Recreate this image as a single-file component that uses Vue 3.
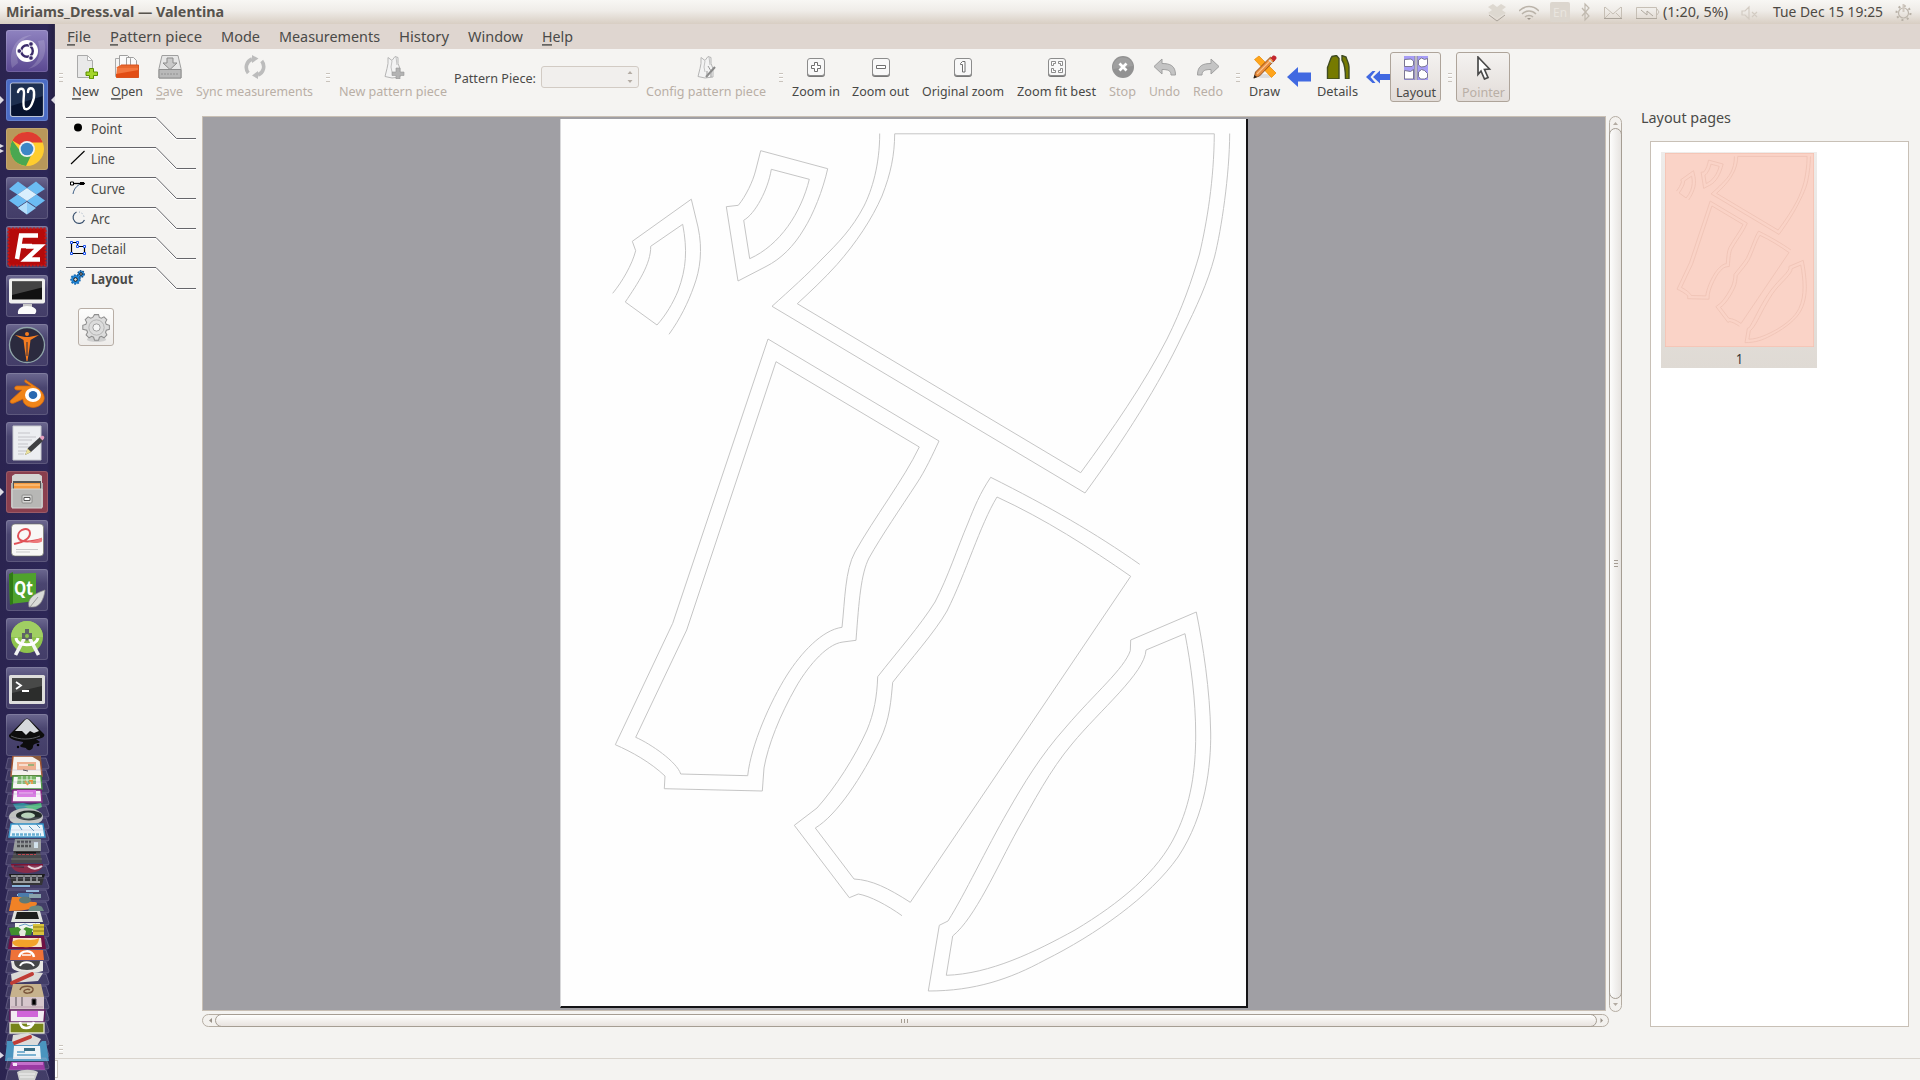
<script setup>
import { h } from 'vue'

// Text label fitted to a fixed advance width, optionally with a mnemonic underline.
const Label = (p) => {
  const size = p.size || 15
  const w = Number(p.w)
  return h('svg', { width: w, height: 20, viewBox: `0 0 ${w} 20`, class: 'label' }, [
    h('text', {
      x: 0, y: 15, textLength: w, lengthAdjust: 'spacingAndGlyphs',
      'font-size': size, 'font-weight': p.bold ? 700 : 400, fill: p.color || '#4a4a48'
    }, p.t),
    p.u ? h('rect', { x: 0, y: 17.2, width: p.u, height: 1.4, fill: p.color || '#4a4a48' }) : null
  ])
}
Label.props = ['t', 'w', 'size', 'bold', 'color', 'u']

const menus = [
  { t: 'File', w: 24, u: 8 }, { t: 'Pattern piece', w: 92, u: 8 }, { t: 'Mode', w: 39 },
  { t: 'Measurements', w: 101 }, { t: 'History', w: 50 }, { t: 'Window', w: 55 }, { t: 'Help', w: 31, u: 10 }
]

const vest = '<path d="M7 2.5l4 3 3-4 3 1v6l2 5v8.5l-8 1-7-1.5 2-8 1-5z" fill="#f3f3f3" stroke="#b5b5b5"/><path d="M11 6l-1 6 1 5M15 2l1 8" fill="none" stroke="#c2c2c2"/>'
const key = (inner) => `<rect x="3" y="5" width="18" height="17" rx="3" fill="#777"/><rect x="3.5" y="3.5" width="17" height="17" rx="2.5" fill="#f8f8f8" stroke="#8c8c8c"/>${inner}`

const tools = [
  { grip: 1, ml: 4 },
  { t: 'New', w: 27, u: 9, ml: 9, i: '<path d="M3.500 .5h10l5 5v17h-15z" fill="#e9e9e9" stroke="#a9a9a9"/><path d="M13.500 .5v5h5z" fill="#fff" stroke="#b5b5b5"/><path d="M15.500 13.500h4v3.500h4v3.500h-4v3.200h-4v-3.200h-3.500v-3.500h3.500z" fill="#a5d62c" stroke="#5c9000"/>' },
  { t: 'Open', w: 32, u: 10, ml: 12, i: '<path d="M.5 3.500h6v18h-6z" fill="#f4f4f4" stroke="#aaa"/><path d="M4.500 .5h8l3 3v16h-11zM11.500 2.500h7l3 3v14h-10z" fill="#fafafa" stroke="#a0a0a0"/><path d="M2 12l4-2h17.500v12.500H1z" fill="#f3773f"/><path d="M1 13h22.500v-3H6z" fill="#e8682f"/><path d="M1 22.500h22.500V15L1 19z" fill="#e24d14"/><path d="M1.500 22.500h22V10H6" fill="none" stroke="#d8531f"/>' },
  { t: 'Save', w: 27, u: 9, off: 1, ml: 13, i: '<path d="M4 .5h16l3 13v9.500H1v-9.500z" fill="#e6e6e6" stroke="#9f9f9f"/><path d="M1 14.500h22V23H1z" fill="#b9b9b9" stroke="#8e8e8e"/><path d="M3 19h18" stroke="#929292" stroke-dasharray="2 1"/><path d="M9 3h6v5h4l-7 6.500L5 8h4z" fill="#c9c9c9" stroke="#8b8b8b"/>' },
  { t: 'Sync measurements', w: 117, off: 1, ml: 13, i: '<path d="M5.300 18A9 9 0 0 1 9 4M18.700 6A9 9 0 0 1 15 20" fill="none" stroke="#bcbcbc" stroke-width="3.600"/><path d="M9 0l6.500 3.500L9 8zM15 16v8l-6-3.500z" fill="#bcbcbc"/>' },
  { grip: 1, ml: 13 },
  { t: 'New pattern piece', w: 108, off: 1, ml: 9, i: vest + '<path d="M15 13h4v4h4v3.500h-4V24h-4v-3.500h-4V17h4z" fill="#b3b3b3" stroke="#989898" stroke-width=".6"/>' },
  { combo: 1 },
  { t: 'Config pattern piece', w: 120, off: 1, ml: 7, i: vest + '<path d="M21 12l-9 10" stroke="#888" stroke-width="2"/><path d="M14 11l3 5M13 16v6M17 17v5" stroke="#999"/>' },
  { grip: 1, ml: 13 },
  { t: 'Zoom in', w: 48, ml: 9, i: key('<path d="M10.500 7.500h3v3h3v3h-3v3h-3v-3h-3v-3h3z" fill="#fff" stroke="#707070"/>') },
  { t: 'Zoom out', w: 57, ml: 12, i: key('<path d="M7.500 10.500h9v3h-9z" fill="#fff" stroke="#707070"/>') },
  { t: 'Original zoom', w: 82, ml: 13, i: key('<path d="M9.500 8.500l2-2h2.500v10.500h-2.500v-7.500h-2z" fill="#fff" stroke="#707070"/>') },
  { t: 'Zoom fit best', w: 79, ml: 13, i: key('<path d="M6.500 10.500v-4h4v2h-2v2zM13.500 6.500h4v4h-2v-2h-2zM6.500 13.500v4h4v-2h-2v-2zM17.500 13.500v4h-4v-2h2v-2z" fill="#fff" stroke="#707070" stroke-width=".8"/>') },
  { t: 'Stop', w: 27, off: 1, ml: 13, i: '<circle cx="12" cy="12" r="11" fill="#929292"/><path d="M2 14a10 10 0 0 1 20-3z" fill="#a9a9a9" opacity=".6"/><path d="M8.500 8.500l7 7M15.500 8.500l-7 7" stroke="#fff" stroke-width="2.800"/>' },
  { t: 'Undo', w: 31, off: 1, ml: 13, i: '<path d="M1 11.500L9 4v4.500c8 0 13.500 2 13.500 11.500h-4.500c0-4.500-3-5.500-9-5.500V19z" fill="#c4c4c4" stroke="#a0a0a0"/>' },
  { t: 'Redo', w: 30, off: 1, ml: 13, i: '<path d="M23 11.500L15 4v4.500C7 8.500 1.500 10.500 1.500 20H6c0-4.500 3-5.500 9-5.500V19z" fill="#c4c4c4" stroke="#a0a0a0"/>' },
  { grip: 1, ml: 13 },
  { t: 'Draw', w: 31, ml: 9, i: '<ellipse cx="12" cy="21" rx="8" ry="2" fill="#ddd"/><path d="M1.500 4.500L6 1l17 17-4.500 4.500z" fill="#ffa51c" stroke="#e88a00" stroke-width=".7"/><path d="M1 23l1.500-6L17.500 2l4 3.500L6.500 21z" fill="#e78a3a" stroke="#7d3f0e" stroke-width=".8"/><path d="M4 19L19 4" stroke="#fcc48b" stroke-width="1.200"/><path d="M17.500 3.500l2-2.500c2-1.500 5 1 3.700 3l-2 2.200z" fill="#c3262e"/><path d="M16 5l4 3.500" stroke="#ddd" stroke-width="1.500"/><path d="M.5 23.500l1-3.500 2.500 2z" fill="#222"/>' },
  { arrow: '<path d="M0 12L11 2v5.500h13v9H11V22z" fill="#4169e1"/>', ml: 7 },
  { t: 'Details', w: 41, ml: 6, i: '<path d="M1.500 24V12.500C3.500 8 4 4 6 1.500l4.500-1 2.500 3V24zM16 .5l4 1.500c1 4 3 6 3 10v12h-3.500C19.500 14 18 8 16 5z" fill="#767a00" stroke="#3f4b22" stroke-width="1.400"/>' },
  { arrow: '<path d="M0 12l6.500-6h3l-5 6 5 6h-3zM7 12l7-6.500V9h10v6H14v3.500z" fill="#4169e1"/>', ml: 8 },
  { t: 'Layout', w: 40, bw: 51, ml: 0, i: '<path d="M0 0h24v24H0z" fill="#a79df6"/><path d="M.5 3.500L7 3l2.500 2v4L8 10.500H.5zM14.500 4l3-2 3 1.500 3-1v6l-2.500 2-4 .5-2.500-2zM.5 14.500l6 1 3-2v9.500h-9zM14.500 16l3-2.500 3 1 3 3v4l-3 1.500h-4l-2-2.500z" fill="#fff" stroke="#6f6c86" stroke-width=".9"/><path d="M12 0v24" stroke="#85828c" stroke-width="3"/><path d="M12 0v24" stroke="#e4e2e6" stroke-width="1.200"/>' },
  { grip: 1, ml: 7 },
  { t: 'Pointer', w: 43, off: 1, bw: 54, ml: 4, i: '<path d="M7 1l11.500 12-5 .5 3.500 8-3.500 1.500-3.500-8-3 3.500z" fill="#fff" stroke="#4a4a4a" stroke-width="1.700"/>' }
]

const tabs = [
  { t: 'Point', w: 31, i: '<circle cx="8" cy="7.500" r="4" fill="#000"/>' },
  { t: 'Line', w: 24, i: '<path d="M1 14L14.500 1" stroke="#000" stroke-width="1.100"/>' },
  { t: 'Curve', w: 34, i: '<path d="M3 14C4 8 8 4 14 3" fill="none" stroke="#3d5e86" stroke-width="1"/><path d="M2 3.500h13" stroke="#000" stroke-width="1.300"/><path d="M.5 2h3v3h-3z" fill="#fff" stroke="#000"/><path d="M10 2h4v3h-4z" fill="#000"/>' },
  { t: 'Arc', w: 19, i: '<path d="M6.500 2A6 6 0 1 0 14.500 10" fill="none" stroke="#38506e" stroke-width="1.200"/><path d="M9 2a6 6 0 0 1 5 5" fill="none" stroke="#8ea1b8" stroke-dasharray="1 2"/>' },
  { t: 'Detail', w: 35, i: '<path d="M1.500 2.500h6v4h7v7h-13z" fill="none" stroke="#000" stroke-width="1.200"/><path d="M.5 1.500h2v2h-2zM6.500 1.500h2v2h-2zM6.500 5.500h2v2h-2zM13.500 5.500h2v2h-2zM.5 12.500h2v2h-2zM13.500 12.500h2v2h-2z" fill="#fff" stroke="#1750f0"/>' },
  { t: 'Layout', w: 42, bold: 1, i: '<circle cx="5.500" cy="9.500" r="4.400" fill="#1f88dc" stroke="#1a6db4" stroke-width="1.800" stroke-dasharray="1.800 1.300"/><circle cx="5.500" cy="9.500" r="1.800" fill="#ddd" stroke="#111"/><circle cx="11" cy="4" r="3.200" fill="#2a92e4" stroke="#1a4f86" stroke-width="1.500" stroke-dasharray="1.500 1.200"/><circle cx="11" cy="4" r="1.300" fill="#ddd" stroke="#111"/>' }
]

const launcher = [
  { bg: 'linear-gradient(#8f83c0,#5a4891)', i: '<path d="M6 38C2 20 10 6 26 5c-12 4-17 14-14 28zM38 10c4 14-2 26-16 29 10-6 14-14 10-28z" fill="#fff" opacity=".16"/><circle cx="21" cy="21" r="11" fill="#fff"/><circle cx="21" cy="21" r="5.800" fill="none" stroke="#3b2c6b" stroke-width="2.400"/><path d="M21 21L12 21M21 21L26 12.500M21 21L26 29.500" stroke="#fff" stroke-width="1"/><circle cx="13.300" cy="21" r="2.300" fill="#3b2c6b" stroke="#fff" stroke-width=".8"/><circle cx="25" cy="14" r="2.300" fill="#3b2c6b" stroke="#fff" stroke-width=".8"/><circle cx="25" cy="28" r="2.300" fill="#3b2c6b" stroke="#fff" stroke-width=".8"/>' },
  { bg: '#4a6bc4', l: 1, r: 1, i: '<rect x="4.500" y="4" width="33" height="33.500" rx="2" fill="#07132f" stroke="#b9c3d8" stroke-width="1.200"/><path d="M5 5h32v12L5 27z" fill="#2d4268" opacity=".6"/><path d="M12 13c1-4 6-5 6 1 0 5-2 14 1 16 5 2 10-9 9-17-.5-5-6-5-6 0" fill="none" stroke="#fff" stroke-width="2.400" stroke-linecap="round"/>' },
  { bg: '#b8985a', l: 2, i: '<circle cx="21" cy="21" r="17" fill="#ffcd2e"/><path d="M21 21L6.300 12.500A17 17 0 0 1 36.500 14H21z" fill="#df3c32"/><path d="M21 4A17 17 0 0 1 36.700 14.500H21z" fill="#df3c32"/><path d="M6.300 12.500A17 17 0 0 0 20 38l6.500-13.500L15 24z" fill="#4aa751"/><circle cx="21" cy="21" r="8" fill="#f2f2f2"/><circle cx="21" cy="21" r="6.300" fill="#3d86c6"/>' },
  { i: '<path d="M12 4.500l9 6.500-9.500 6.500L3 12zM30 4.500L21 11l9.500 6.500L39 12zM3 23.500l8.500-6 9.500 6.500-9 6zM39 23.500l-8.500-6L21 24l9 6z" fill="#6bbcf3"/><path d="M21 11l9.500 6.500L21 24l-9.500-6.500z" fill="#d9effd"/><path d="M12 31l9-6 9 6-9 6.500z" fill="#8bcbf6"/><path d="M12 31l9-6v12.500z" fill="#b5defa"/>' },
  { i: '<rect x="2.500" y="2.500" width="37" height="37" fill="#b50a0a" stroke="#c51818" stroke-dasharray="2 1.500" stroke-width="2"/><path d="M11 33L15 9.500h17M13 20h13M20 20.500h14L20 33.500h14" fill="none" stroke="#fff" stroke-width="4.500"/>' },
  { i: '<rect x="3" y="3.500" width="36" height="25" rx="2" fill="#f0f0ee"/><rect x="6" y="6.500" width="30" height="18" fill="#111"/><path d="M6 6.500h30v6L6 20z" fill="#444"/><path d="M17 29h9v3h-9z" fill="#c9c9c9"/><path d="M12 39c-1-5 3-8 9-8s12 3 8 8z" fill="#fafafa"/>' },
  { i: '<circle cx="21" cy="21" r="17.500" fill="#2b2a3e" stroke="#8fa4a8" stroke-width="1.300"/><circle cx="21" cy="10" r="2" fill="#f47c20"/><path d="M9 11l10 2h4l10-2-8.500 5-1 8-2 13h-1l-2-13-1-8z" fill="#f47c20"/><path d="M21 18v14" stroke="#2b2a3e"/>' },
  { i: '<path d="M21 8l12 8c6 5 6 10 4 13-4 7-15 7-19 1-1-2-1-3-1-4l-9 4c-3 1-5-1-3-3l11-10H11c-3 0-3-4 0-4h14l-6-4c-1-2 1-3 2-1z" fill="#f18519" stroke="#d96a09" stroke-width=".8"/><ellipse cx="27" cy="22" rx="8" ry="7" fill="#fff"/><ellipse cx="27" cy="22" rx="4.300" ry="4" fill="#2a68b0"/>' },
  { i: '<path d="M7 4h28v34H7z" fill="#eceef1" stroke="#c9cbd0"/><path d="M12 11h12M12 15h18M12 18h14M12 22h10M12 25h14M12 29h10M12 32h6" stroke="#c3c3c9" stroke-width="1.200"/><path d="M19 33l3-7L34 15l3.500 3.500L25 30z" fill="#3f4043"/><path d="M19 33l2.500-6.500L25 30z" fill="#e9df9a"/><path d="M33.500 15.500l2-1.500c2-1 3.500 1 2.500 2.500l-1.500 2z" fill="#e7a0c0"/>' },
  { bg: '#8a3f4e', l: 1, i: '<path d="M6 5l3-2h24l3 2v8H6z" fill="#d4d4d2"/><path d="M5 12h32v24H5z" fill="#b2b2b0"/><path d="M7 10h28v8H7z" fill="#555"/><path d="M8 12h26v6H8z" fill="#f59a3f"/><path d="M8 14h26" stroke="#ffd39b"/><path d="M6 18h30v19H6z" fill="#b7b7b5" stroke="#d7d7d5"/><rect x="16" y="24" width="10" height="8" rx="1" fill="#d9d9d7" stroke="#8c8c8a"/><path d="M18 26.500h6v3h-6z" fill="#fff" stroke="#555"/>' },
  { i: '<rect x="5.500" y="4" width="32" height="32" rx="3.500" fill="#f8f8f6" stroke="#6c7060" stroke-width=".6"/><path d="M8 24c10-2 16-6 16-11 0-7-12-4-12 3 0 6 9 7 24 3" fill="none" stroke="#e05257" stroke-width="2"/><path d="M22 21.500c6 0 10-2 14-4v4c-4 2-9 2-14 0z" fill="#ec7a7c"/><path d="M10 29.500h22M10 32h14" stroke="#c9c9c9"/>' },
  { i: '<path d="M3 5l27-1v28L4 35z" fill="#4fa22d"/><path d="M3 5l4-2v32l-3 1z" fill="#2f7b15"/><text x="8" y="26" font-size="20" font-weight="700" font-family="Open Sans, sans-serif" textLength="19" lengthAdjust="spacingAndGlyphs" fill="#fff">Qt</text><path d="M23 38c-2-8 4-13 16-17-1 9-5 17-12 17z" fill="#d9dad8" stroke="#8e8e8c" stroke-width=".7"/><path d="M24 38l8-10" stroke="#999"/>' },
  { i: '<circle cx="21" cy="19" r="16" fill="#8fc44d"/><path d="M5 19a16 16 0 0 1 32 0z" fill="#a0cf63"/><path d="M18.500 20L9.500 37M23.500 20l9 17" stroke="#f3f3f3" stroke-width="3.600"/><path d="M10 20c1 9 20 9 22 0" fill="none" stroke="#fff" stroke-width="3"/><path d="M19 11h4v4h3v6h-3l-2 2-2-2h-3v-6h3z" fill="#5f6367"/><circle cx="21" cy="18" r="2" fill="#8fc44d"/>' },
  { i: '<rect x="3" y="8" width="36" height="29" rx="1.500" fill="#dededc"/><rect x="6" y="11" width="30" height="23" fill="#2c2d2c"/><path d="M6 11h30v8L6 26z" fill="#484948"/><path d="M10 15l5 3.500-5 3.500M16 24h7" fill="none" stroke="#fff" stroke-width="1.800"/>' },
  { ink: 1, i: '<path d="M3 21L18 6q3-3 6 0l14 14c2 3-4 5-8 5l4 3c-3 2-7 1-7 5-1 4-6 4-7 1l-5-1c-3-2 3-3 2-5-6-1-15-3-14-7z" fill="#0d0d0d"/><path d="M9 17L19 6q2-2 4 0l10 11-5 2-4-2-4 4-4-4z" fill="#d6d9dc"/><path d="M5 22c8 4 20 4 29 0" stroke="#5d5f64" fill="none"/><circle cx="32" cy="31" r="1.300"/><circle cx="12" cy="33" r="1.200"/>' }
]

// Seam and cutting contours of every detail placed on the sheet.
const contours = [
  'M612.700 293.300C622 282 632 265 635.700 250.700L632.300 241.300L691.300 199.200L698 227C703 250 700 270 694 286C688 303 680 319 669 334.300',
  'M650.700 246.300L682.700 224.300C687.500 250 686.500 268 678 291C673 303 666 315 657 325L625.300 302C638 283 651 264 650.700 246.300Z',
  'M760.700 150.700L827.700 168.700C823 190 813 215 804 229C794 246 781 259 766 266.500L738 281L726.300 206.700L738.300 205.300C746 196 753 181 755.500 171Z',
  'M771.300 169.300L809.300 179.300C801 213 780 245 749.700 258.700L743.700 220.300C755 214 768 190 771.300 169.300Z',
  'M879.700 133.500C879.700 165 872 190 864 206C852 229 838 243 822 259C808 274 790 290 772 306.300L1085 493C1124 440 1160 383 1182 336C1197 306 1207.500 283 1214.500 257C1221.500 229 1229.500 175 1229.700 133.500',
  'M894.700 133.800H1214.300C1214 180 1207 222 1199.500 254C1192 280 1182 309 1167 339C1144 384 1112 430 1080.700 472.700L797.300 303.700C810 292 824 279 837 264.500C856 243 872 219 882 196C891 173 894.500 155 894.700 133.800Z',
  'M768 339L939 441C933 454 925 471 917 483C900 509 882 535 869 558C861 574 859 600 856 640.300L843 642C825 644 805 671 796 687C780 715 768 745 764 768L762.300 791L664.300 788.700L665 776C650 762 632 752 615.300 744.700L672.700 623.300Z',
  'M776 361.700L919.300 447C904 479 874 518 855 552C845 570 845 600 842 627.300C822 630 801 653 787 675C770 702 751 745 747.700 775.700L680.700 774C677 762 651 744 635.700 737.300L686.700 630Z',
  'M1139.700 564.300C1095 533 1050 507 990.700 477.300C980 493 974 508 968 523C957 549 948 577 935 602C920 626 897 652 877.700 676.700C877 697 874 713 867 730C855 757 835 788 817 808L794.300 825.300L849.300 897.700L858.300 894C870 896 887 905 902 915.700',
  'M997 497C1045 519 1090 548 1130.700 576.300L910.300 902.300C888 888 872 880 854 879L815.300 828C837 815 862 777 880 740C890 719 891 700 892.700 682.300C910 660 935 632 947 611C966 573 980 525 997 497Z',
  'M1196.300 612L1130.700 640L1130.300 650.700C1124 669 1095 693 1066 727C1040 756 1023 785 1008 811C986 849 965 894 948 921L939.300 925.300L928.300 991C975 991 1010 979 1045 960C1095 935 1150 897 1178 857C1206 815 1211 765 1210.700 733C1210 690 1203 645 1196.300 612Z',
  'M1185 633.700L1146 650C1145 673 1100 710 1072 744C1050 770 1033 803 1018 829C997 867 975 918 952.700 936L946.300 975.300C990 974 1035 952 1075 930C1120 903 1158 872 1176 834C1191 803 1195.700 770 1195.700 735C1195.700 700 1191 665 1185 633.700Z'
]
const gear = 'M15.500 2h5l1 3.500 2.500 1 3.300-1.700 3.500 3.500-1.700 3.200 1 2.600 3.900 1.200v5l-3.800 1.100-1 2.600 1.700 3.300-3.500 3.500-3.300-1.700-2.500 1-1 3.700h-5l-1.200-3.700-2.500-1-3.200 1.700-3.600-3.500 1.800-3.300-1-2.600L1 20.300v-5l3.800-1.200 1-2.600L4 8.300l3.600-3.500 3.200 1.700 2.500-1z'
const stack = [
  '<path d="M13 0h27l2 20H11z" fill="#f5f1ec" stroke="#a0522d" stroke-width="1.500"/><path d="M31 0h10v6z" fill="#8a5a3c"/><path d="M17 6h19v8H17z" fill="#eeb090"/><path d="M19 9h9" stroke="#f7dccc" stroke-width="2"/><path d="M28 9h6" stroke="#9bb07a" stroke-width="2"/><path d="M23 14l5 1" stroke="#333"/>',
  '<path d="M13 20h28l1 13H12z" fill="#f7f7f4" stroke="#3a8b34" stroke-width="1.500"/><path d="M18 20h18v8H17z" fill="#76b566"/><path d="M17 24h19M22 20v8M27 20v8M31 20v8" stroke="#e6f3e0"/><path d="M25 25l3 4M29 25h3v3" stroke="#e89238" stroke-width="2" fill="none"/>',
  '<path d="M13 34h28l1 12H12z" fill="#f6eff6" stroke="#7b1d79" stroke-width="1.500"/><path d="M17 34h19v7H17z" fill="#d66fe0"/><path d="M19 37h14" stroke="#f2c2f5"/>',
  '<path d="M13 48l10-1 16 4-6 5H18z" fill="#2f8d9a"/><path d="M24 50l17-3 1 4-9 4z" fill="#48b878"/>',
  '<ellipse cx="26" cy="61" rx="17" ry="9" fill="#bfc2c0"/><ellipse cx="29" cy="59.500" rx="13" ry="5" fill="#222b28"/><ellipse cx="28" cy="59.500" rx="7" ry="3" fill="#b8d3b9"/>',
  '<path d="M11 68h32l2 13H9z" fill="#e9f4fa" stroke="#2f91c7" stroke-width="1.500"/><path d="M18 68l4 6M29 70l5 5M36 68l4 4" stroke="#4f90b8"/><path d="M12 78.500h29" stroke="#5aa6cf" stroke-width="2.500" stroke-dasharray="3 1"/>',
  '<path d="M15 83h26v12H13z" fill="#8e9394"/><path d="M17 86h14M17 90h14" stroke="#3a3d3f" stroke-width="2.500" stroke-dasharray="3 1"/><path d="M34 86h4v6h-4z" fill="#cfe0ea"/>',
  '<path d="M14 95h26l2 12H11z" fill="#353638"/><path d="M16 97.500h20" stroke="#151515" stroke-width="3"/><path d="M18 98.500h18" stroke="#b82020" stroke-dasharray="3 1"/><path d="M11 103h31" stroke="#666"/>',
  '<path d="M11 108h32c0 5-5 9-16 9s-16-4-16-9z" fill="#7c1535"/><path d="M28 110c5 4 10 3 14 0" stroke="#e5d5dc" stroke-width="2" fill="none"/><path d="M14 110l10 1" stroke="#39102a" stroke-width="2"/>',
  '<path d="M9 118h36l-3 11H12z" fill="#1d1e20"/><path d="M11 120h31M13 126h27" stroke="#b5b8ba" stroke-width="1.500"/><path d="M17 119v6M24 119v6M31 119v6M37 119v6" stroke="#7a7c7f" stroke-width="2"/>',
  '<path d="M12 130h18M26 135h13M17 139h13" stroke="#8ab4d8" stroke-width="2"/>',
  '<path d="M18 137h15v4H18z" fill="#4b7cab"/><path d="M29 138h12v4H29z" fill="#8aa3ac"/>',
  '<path d="M12 141h12c3 8 12 3 13 6 0 5-9 8-28 8z" fill="#f08226"/><ellipse cx="25" cy="144" rx="6" ry="3.500" fill="#5f7a75"/><path d="M30 151c5-2 10-2 12 0l2 4H28z" fill="#6c8a81"/>',
  '<path d="M14 155h26l3 11H11z" fill="#dfe2de"/><path d="M17 156h20l2 7H15z" fill="#1c1e1c"/>',
  '<path d="M15 167h25v9H15z" fill="#f2f4ef"/><path d="M19 170l6-2 5 2 6-2" stroke="#6ba3c9" fill="none"/><path d="M33 168h11v11H33z" fill="#d9c33d"/><path d="M33 171h11M33 175h11" stroke="#8f7c14"/><path d="M9 172l9-1 4 3 4-3 7 2-2 6H11z" fill="#418f2e"/><path d="M19 176l3-4 4 3-1 5h-5z" fill="#e6eade"/>',
  '<path d="M10 180h34l2 13H8z" fill="#6d1245"/><path d="M13 182h28l1 9H12z" fill="#f5e3c6"/><path d="M12 186c8-6 18 1 27-4 0 8-7 10-16 9-7 0-10-2-11-5z" fill="#f3a22a"/>',
  '<path d="M11 194h32l1 10H10z" fill="#ee7238"/><path d="M19 201c2-7 13-8 15 0" fill="none" stroke="#fff" stroke-width="2.500"/><path d="M22 199h9" stroke="#fff" stroke-width="1.500"/>',
  '<path d="M11 205h32v10c-9 3-25 3-31-3z" fill="#e6e6e3"/><path d="M14 205h26c0 6-5 9-13 9s-13-3-13-9z" fill="#454648"/><path d="M20 210c2-5 11-5 14 0" fill="none" stroke="#fff" stroke-width="2"/>',
  '<path d="M11 218l10-3 22 2-5 8-26 2z" fill="#dadad7"/><path d="M12 227l20-9" stroke="#c03d36" stroke-width="4" stroke-linecap="round"/>',
  '<path d="M13 228h28l3 13H10z" fill="#c7b28d"/><path d="M20 234c1-5 14-5 13 0-1 4-10 4-9 1 1-2 5-2 6-1" fill="none" stroke="#79543a" stroke-width="1.500"/>',
  '<path d="M10 241h34v13H10z" fill="#d6c6cc"/><path d="M16 241v9M22 241v9M32 243h4v6h-4z" stroke="#554d54"/><path d="M11 251h32" stroke="#b99fac"/>',
  '<path d="M10 254h35l-1 12H10z" fill="#f2ebf2" stroke="#5d1b5c" stroke-width="1.500"/><path d="M17 255h21v6H17z" fill="#cf64d8"/>',
  '<path d="M10 267h34v10H10z" fill="#77841b" stroke="#e7ead2" stroke-width="1.300"/><path d="M34 266c-3 8-13 8-14 0M27 268h7" fill="none" stroke="#fff" stroke-width="2.500"/>',
  '<path d="M13 279l15-2 13 6-4 7-26 2z" fill="#dcdcda"/><path d="M12 288l18-7" stroke="#c03d36" stroke-width="4" stroke-linecap="round"/>',
  '<path d="M7 285h5l2 4h24l4-4h4l3 20H5z" fill="#4a94bf"/><path d="M14 290h26l1 13H13z" fill="#eef4f7"/><path d="M17 296h8M17 299h19" stroke="#7db3d2" stroke-width="2"/><path d="M24 292h11v3H24z" fill="#3a6f86"/>',
  '<path d="M11 306h33l1 8H9z" fill="#9b3aa3"/><path d="M12 306h31v3H12z" fill="#c46fca"/><path d="M13 307h4v3h-4z" fill="#f6e6f7"/>',
  '<path d="M17 316c5-3 16-3 21 0l-3 8H19z" fill="#cfd0ce"/><path d="M19 318h16M20 321h14" stroke="#f2f2f2"/>'
]
</script>

<template>
  <div class="desktop">
    <header class="panel">
      <Label t="Miriams_Dress.val — Valentina" w="218" size="15" bold="1" color="#57534d" />
      <div class="indicators">
        <svg width="18" height="20" viewBox="0 0 18 20"><path d="M0 5l5-3 4 3 4-3 5 3-4 3 4 3-9 5-9-5 4-3z" fill="#ddd8d0" /><path d="M1 13l8 6 8-6" fill="none" stroke="#aaa39a" /></svg>
        <svg class="i-wifi" width="20" height="20" viewBox="0 0 20 20"><path d="M0 9c6-6 14-6 20 0M3 12c4-4 10-4 14 0M6 15c2-2 6-2 8 0" fill="none" stroke="#bbb4aa" stroke-width="1.500" /><path d="M8 16h4l-2 2z" fill="#9d968c" /></svg>
        <div class="i-lang"><Label t="En" w="14" size="12" color="#e9e5df" /></div>
        <svg class="i-bt" width="10" height="20" viewBox="0 0 10 20"><path d="M1 6l7 8-4 4V2l4 4-7 8" fill="none" stroke="#c0b9af" stroke-width="1.200" /></svg>
        <svg class="i-mail" width="18" height="16" viewBox="0 0 18 16"><path d="M.5 3v11M17.500 3v11M1 3l8 7 8-7M1 14l5-5M17 14l-5-5" fill="none" stroke="#c6bfb5" /><path d="M0 14.500h18" stroke="#aaa39a" /></svg>
        <svg class="i-bat" width="24" height="16" viewBox="0 0 24 16"><path d="M.5 14V3.500h20V14M21 5l2 3-2 3" fill="none" stroke="#c6bfb5" /><path d="M0 14.500h21M5 6l6 5v-4l6 5" fill="none" stroke="#b0a99f" /></svg>
        <Label class="i-time" t="(1:20, 5%)" w="65" size="14.500" color="#4d4943" />
        <svg class="i-vol" width="18" height="16" viewBox="0 0 18 16"><path d="M1 7h3l4-4v12l-4-4H1zM11 8l5 5M16 8l-5 5" fill="none" stroke="#d3ccc3" stroke-width="1.200" /></svg>
        <Label class="i-clock" t="Tue Dec 15 19:25" w="110" size="14.500" color="#4d4943" />
        <svg class="i-cog" width="17" height="20" viewBox="0 0 17 20"><circle cx="8.500" cy="11" r="5" fill="none" stroke="#bdb6ac" stroke-width="1.200" /><circle cx="8.500" cy="11" r="7" fill="none" stroke="#b8b1a7" stroke-width="2" stroke-dasharray="2 3.500" /><path d="M8.500 2v8" stroke="#d0c9c0" stroke-width="2" /></svg>
      </div>
    </header>

    <div class="work">
      <aside class="launcher">
        <div v-for="(a, n) in launcher" :key="n" class="tile" :class="{ ink: a.ink }" :style="a.bg ? { background: a.bg } : null">
          <i v-if="a.l === 2" class="pip left high" /><i v-if="a.l" class="pip left" :class="{ low: a.l === 2 }" /><i v-if="a.r" class="pip right" />
          <svg width="42" height="42" viewBox="0 0 42 42" v-html="a.i" />
        </div>
        <svg class="folded" width="55" height="325" viewBox="0 0 55 325">
          <g v-for="(s, n) in stack" :key="n">
            <path :d="`M8 ${n * 12 + 2}h38l3 9q0 2 -2 2h-40q-2 0 -1 -2z`" fill="#fff" fill-opacity=".1" stroke="#a9a4c4" stroke-opacity=".35" />
            <g v-html="s" />
          </g>
          <path d="M0 296l4 3.500-4 3z" fill="#dcdae4" />
        </svg>
      </aside>

      <main class="window">
        <nav class="menubar"><Label v-for="m in menus" :key="m.t" v-bind="m" size="14.500" /></nav>

        <div class="toolbar">
          <template v-for="(b, n) in tools" :key="n">
            <span v-if="b.grip" class="grip" :style="{ marginLeft: b.ml + 'px' }" />
            <div v-else-if="b.combo" class="picker">
              <Label t="Pattern Piece:" w="82" size="13" />
              <div class="combo"><svg width="8" height="14" viewBox="0 0 8 14"><path d="M4 1l2.500 3h-5zM4 13l2.500-3h-5z" fill="#b4aca4" /></svg></div>
            </div>
            <svg v-else-if="b.arrow" class="arrow" width="24" height="24" viewBox="0 0 24 24" :style="{ marginLeft: b.ml + 'px' }" v-html="b.arrow" />
            <div v-else class="tool" :class="{ pressed: b.bw }" :style="{ marginLeft: b.ml + 'px', width: (b.bw || b.w) + 'px' }">
              <svg width="24" height="24" viewBox="0 0 24 24" v-html="b.i" />
              <Label :t="b.t" :w="b.w" size="13" :u="b.u" :color="b.off ? '#b9afa6' : '#484846'" />
            </div>
          </template>
        </div>

        <div class="body">
          <div class="tabs">
            <div v-for="t in tabs" :key="t.t" class="tab">
              <svg class="edge" width="131" height="24" viewBox="0 0 131 24"><path d="M0 2.500H90L110.500 23.500H130" fill="none" stroke="#fff" stroke-width="1.500" /><path d="M0 1.500H90L110.500 22.500H130" fill="none" stroke="#65656a" /></svg>
              <div class="tab-row">
                <svg width="16" height="16" viewBox="0 0 16 16" v-html="t.i" />
                <Label :t="t.t" :w="t.w" :bold="t.bold" size="14" />
              </div>
            </div>
            <div class="gear-btn">
              <svg width="29" height="29" viewBox="0 0 36 36"><ellipse cx="18" cy="33" rx="12" ry="3" fill="#cfcfcf" /><path :d="gear" fill="#dcdcdc" stroke="#8e8e8e" stroke-width="1.300" /><circle cx="18" cy="18" r="9.500" fill="none" stroke="#aaa" /><circle cx="18" cy="18" r="4.500" fill="#f6f6f6" stroke="#8e8e8e" /></svg>
            </div>
          </div>

          <div class="canvas">
            <div class="row">
              <div class="view">
                <div class="sheet">
                  <svg width="685" height="886" viewBox="561 119 685 886"><path v-for="d in contours" :key="d" :d="d" fill="none" stroke="#c2c2c2" stroke-width=".95" /></svg>
                </div>
              </div>
              <div class="vbar">
                <svg width="13" height="11" viewBox="0 0 13 11"><path d="M6.500 5l2.500 3H4z" fill="#b3aba2" /></svg>
                <div class="thumb"><span /></div>
                <svg width="13" height="12" viewBox="0 0 13 12"><path d="M6.500 7L9 4H4z" fill="#b3aba2" /></svg>
              </div>
            </div>
            <div class="hbar">
              <svg width="12" height="11" viewBox="0 0 12 11"><path d="M6 5.500L9 3v5z" fill="#999188" /></svg>
              <div class="thumb"><span /></div>
              <svg width="11" height="11" viewBox="0 0 11 11"><path d="M6 5.500L3.500 3v5z" fill="#999188" /></svg>
            </div>
          </div>

          <section class="pages">
            <Label t="Layout pages" w="90" size="14.500" />
            <div class="list">
              <div class="item">
                <svg width="149" height="194" viewBox="560 118 686 893" preserveAspectRatio="none"><rect x="560" y="118" width="686" height="893" fill="#fad3c7" stroke="#f3bfb0" stroke-width="6" /><path v-for="d in contours" :key="d" :d="d" fill="none" stroke="#efc3b5" stroke-width="4" /></svg>
                <Label t="1" w="7" size="14.500" color="#333" />
              </div>
            </div>
          </section>
        </div>

        <div class="lower-dock"><span class="grip" /></div>
        <footer class="status"><i /></footer>
      </main>
    </div>
  </div>
</template>

<style>
html, body { margin: 0; overflow: hidden; }
.label { display: block; flex: none; overflow: visible; }
</style>

<style scoped>
.desktop { width: 1920px; height: 1080px; overflow: hidden; display: flex; flex-direction: column; font-family: "Noto Sans", "Open Sans", sans-serif; background: #f4f3f1; }
svg { display: block; flex: none; }
.panel { height: 24px; flex: none; display: flex; justify-content: space-between; padding: 2px 8px 0 6px; box-sizing: border-box; background: linear-gradient(#f8f7f4, #efece8 45%, #d8cec3); }
.indicators { display: flex; align-items: flex-start; }
.i-wifi { margin-left: 13px; }
.i-lang { margin-left: 11px; width: 20px; height: 20px; display: flex; justify-content: center; background: #dcd6ce; border-radius: 2px; }
.i-bt { margin-left: 11px; }
.i-mail { margin: 2px 0 0 13px; }
.i-bat { margin: 2px 0 0 14px; }
.i-time { margin-left: 3px; }
.i-vol { margin: 2px 0 0 13px; }
.i-clock { margin-left: 14px; }
.i-cog { margin-left: 12px; }

.work { flex: 1; display: flex; min-height: 0; }
.launcher { width: 55px; flex: none; box-sizing: border-box; padding-top: 6px; overflow: hidden; background: linear-gradient(90deg, #2b2450, #2d2757 85%, #252046 97%, #3d3855); }
.tile { position: relative; width: 42px; height: 42px; margin: 0 0 7px 6px; border-radius: 3px; background: linear-gradient(#6c6890, #4a4570 35%, #433d68); box-shadow: inset 0 0 0 1px rgba(255, 255, 255, .14); }
.tile.ink { margin-top: -2px; margin-bottom: 0; }
.pip { position: absolute; top: 17px; width: 0; height: 0; border: 4px solid transparent; }
.pip.left { left: -6px; border-left-color: #dddbe4; }
.pip.left.high, .pip.left.low { border-width: 2px 0 2px 4px; top: 16px; }
.pip.left.low { top: 21px; }
.pip.right { right: -7px; border-right-color: #dddbe4; border-left: 0; }

.window { flex: 1; display: flex; flex-direction: column; min-width: 0; }
.menubar { height: 25px; flex: none; box-sizing: border-box; display: flex; gap: 19px; padding: 3px 0 0 12px; background: #dfd6d0; }
.toolbar { height: 61px; flex: none; display: flex; align-items: flex-start; background: #f5f4f2; }
.grip { width: 4px; height: 9px; flex: none; margin-top: 24px; background: repeating-linear-gradient(#c9c3bc 0 1px, #fff 1px 2px, transparent 2px 4px); }
.tool { flex: none; box-sizing: border-box; padding-top: 6px; height: 54px; display: flex; flex-direction: column; align-items: center; gap: 2px; }
.tool.pressed { margin-top: 3px; height: 50px; padding-top: 3px; border: 1px solid #aea49a; border-radius: 3px; background: linear-gradient(#f4f2f0, #e2dcd8); }
.arrow { margin-top: 16px; }
.picker { display: flex; margin: 17px 0 0 7px; gap: 5px; align-items: center; }
.picker .label { margin-top: 1px; }
.combo { width: 98px; height: 22px; box-sizing: border-box; border: 1px solid #d2cbc4; border-radius: 3px; background: #f1efed; display: flex; align-items: center; justify-content: flex-end; padding-right: 4px; }

.body { height: 923px; flex: none; display: flex; }
.tabs { width: 147px; flex: none; box-sizing: border-box; padding: 6px 0 0 11px; }
.tab { position: relative; height: 30px; }
.edge { position: absolute; left: 0; top: 0; }
.tab-row { display: flex; gap: 5px; padding: 3px 0 0 4px; }
.tab-row > svg:first-child { margin-top: 1px; }
.gear-btn { width: 36px; height: 38px; margin: 12px 0 0 12px; box-sizing: border-box; border: 1px solid #b8aea6; border-radius: 3px; background: linear-gradient(#fdfdfc, #eeecea); display: flex; align-items: center; justify-content: center; }

.canvas { width: 1420px; flex: none; padding-top: 6px; }
.row { display: flex; gap: 3px; height: 898px; }
.view { width: 1404px; height: 895px; box-sizing: border-box; border: 1px solid #c8bfb4; background: #a09fa4; display: flex; padding: 2px 0 0 357px; }
.sheet { width: 685px; height: 887px; background: #fefefe; border-left: 1px solid #d8d8da; border-right: 2px solid #141416; border-bottom: 2px solid #141416; }
.vbar { width: 13px; height: 896px; box-sizing: border-box; border: 1px solid #b5ada3; border-radius: 7px; background: #f3f1ee; display: flex; flex-direction: column; align-items: center; }
.vbar .thumb { flex: 1; width: 13px; margin: 0 -1px; box-sizing: border-box; border: 1px solid #a59d93; border-radius: 7px; background: linear-gradient(90deg, #fdfdfc, #e6e3e0); display: flex; align-items: center; justify-content: center; }
.vbar .thumb span { width: 4px; height: 7px; background: repeating-linear-gradient(#a59d93 0 1px, transparent 1px 3px); }
.hbar { width: 1407px; height: 13px; box-sizing: border-box; border: 1px solid #b5ada3; border-radius: 7px; background: #f3f1ee; display: flex; align-items: center; }
.hbar .thumb { flex: 1; height: 13px; box-sizing: border-box; border: 1px solid #a59d93; border-radius: 7px; background: linear-gradient(#fefefd, #e8e3df); display: flex; align-items: center; justify-content: center; }
.hbar .thumb span { width: 7px; height: 4px; margin-right: 4px; background: repeating-linear-gradient(90deg, #a59d93 0 1px, transparent 1px 3px); }

.pages { padding-left: 19px; margin-top: -2px; }
.list { margin: 13px 0 0 9px; width: 259px; height: 886px; box-sizing: border-box; border: 1px solid #c8c0b6; background: #fff; padding: 10px; }
.item { width: 156px; height: 216px; box-sizing: border-box; padding-top: 1px; background: linear-gradient(#eeecea, #dfdad4); display: flex; flex-direction: column; align-items: center; gap: 2px; }

.lower-dock { height: 25px; flex: none; padding-left: 4px; display: flex; }
.lower-dock .grip { margin-top: 12px; }
.status { height: 22px; flex: none; box-sizing: border-box; border-top: 1px solid #d9d4cd; padding-top: 1px; }
.status i { display: block; width: 3px; height: 18px; box-sizing: border-box; border: 1px solid #cbc5bd; border-left: 0; background: #fff; }
</style>
